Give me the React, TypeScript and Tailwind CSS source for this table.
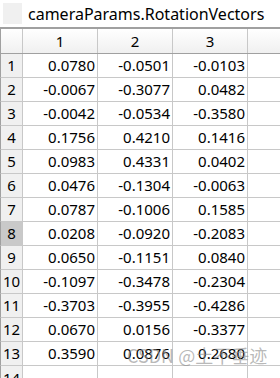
const rows: [string, string, string][] = [
  ["0.0780", "-0.0501", "-0.0103"],
  ["-0.0067", "-0.3077", "0.0482"],
  ["-0.0042", "-0.0534", "-0.3580"],
  ["0.1756", "0.4210", "0.1416"],
  ["0.0983", "0.4331", "0.0402"],
  ["0.0476", "-0.1304", "-0.0063"],
  ["0.0787", "-0.1006", "0.1585"],
  ["0.0208", "-0.0920", "-0.2083"],
  ["0.0650", "-0.1151", "0.0840"],
  ["-0.1097", "-0.3478", "-0.2304"],
  ["-0.3703", "-0.3955", "-0.4286"],
  ["0.0670", "0.0156", "-0.3377"],
  ["0.3590", "0.0876", "0.2680"],
];

export default function App() {
  return (
    <div className="relative w-[280px] h-[378px] overflow-hidden bg-white text-black font-['Noto_Sans',sans-serif]">
      <div className="h-[27px] flex items-center">
        <div className="ml-[3px] w-[19px] h-[21px] bg-[#f0f0f0]" />
        <span className="ml-[6px] text-[16px] leading-none">cameraParams.RotationVectors</span>
      </div>

      <div className="flex h-[27px] border-t-2 border-b border-[#a0a0a0] bg-gradient-to-b from-white to-[#f0f0f0] text-[15px]">
        <div className="w-[23px] border-l border-r border-l-[#a0a0a0] border-r-[#c8c8c8]" />
        {["1", "2", "3"].map(h => (
          <div key={h} className="w-[75px] flex items-center justify-center border-r border-[#c8c8c8]">{h}</div>
        ))}
        <div className="flex-1" />
      </div>

      {rows.map((r, i) => (
        <div key={i} className="flex h-[24px] text-[15px]">
          <div className={`w-[23px] flex items-center justify-center border-l border-l-[#a0a0a0] border-r border-b border-[#c8c8c8] ${i === 7 ? "bg-[#c9c9c9]" : "bg-[#f0f0f0]"}`}>
            {i + 1}
          </div>
          {r.map((v, j) => (
            <div key={j} className="w-[75px] flex items-center justify-end pr-[2px] border-r border-b border-[#c8c8c8]">{v}</div>
          ))}
          <div className="flex-1 border-b border-[#c8c8c8]" />
        </div>
      ))}
      <div className="flex h-[24px] text-[15px]">
        <div className="w-[23px] flex items-center justify-center border-l border-l-[#a0a0a0] border-r border-[#c8c8c8] bg-[#f0f0f0]">14</div>
        <div className="w-[75px] border-r border-[#c8c8c8]" />
        <div className="w-[75px] border-r border-[#c8c8c8]" />
        <div className="w-[75px] border-r border-[#c8c8c8]" />
      </div>

      <div className="absolute left-[127px] top-[343px] text-[18px] leading-[24px] text-[#8a8a8a]/60 font-['Noto_Sans_CJK_SC',sans-serif] whitespace-nowrap">
        CSDN @土不垂迹
      </div>
    </div>
  );
}
